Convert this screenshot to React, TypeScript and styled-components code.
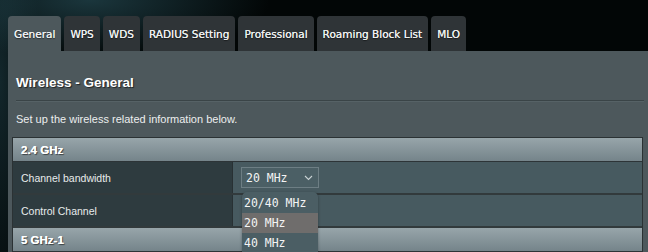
import React from "react";
import styled, { createGlobalStyle } from "styled-components";

const Global = createGlobalStyle`
  html, body { margin: 0; padding: 0; }
  body {
    width: 648px;
    height: 252px;
    overflow: hidden;
    background:
      radial-gradient(ellipse 180px 60px at 90px 0px, rgba(40, 80, 90, 0.65), rgba(0,0,0,0) 100%),
      radial-gradient(ellipse 40px 260px at 0px 80px, rgba(30, 60, 68, 0.6), rgba(0,0,0,0) 100%),
      #020606;
    font-family: "Liberation Sans", Arial, sans-serif;
  }
`;

const Page = styled.div`
  padding: 16px 0 0 8px;
`;

const Tabs = styled.div`
  display: flex;
  gap: 3px;
  height: 35px;
  align-items: flex-end;
`;

const Tab = styled.div<{ $active?: boolean }>`
  height: 35px;
  box-sizing: border-box;
  padding: 0 6px;
  display: flex;
  align-items: center;
  border-radius: 4px 4px 0 0;
  background: ${(p) => (p.$active ? "#4d585c" : "#2f3437")};
  color: #eef0f0;
  font-family: "DejaVu Sans", Verdana, sans-serif;
  font-size: 10.5px;
  text-shadow: 0 0 0.4px #eef0f0, 0 1px 1px rgba(0, 0, 0, 0.5);
`;

const Panel = styled.div`
  background: #4d585c;
  width: 640px;
  box-sizing: border-box;
  padding: 0 0 0 4px;
  height: 210px;
  position: relative;
`;

const Title = styled.div`
  padding: 21px 0 0 4px;
  line-height: 22px;
  font-size: 13.5px;
  font-weight: bold;
  color: #ffffff;
  text-shadow: 1px 1px 1px rgba(0, 0, 0, 0.6);
`;

const Separator = styled.div`
  margin: 6px 4px 0 4px;
  height: 1px;
  background: #3a4447;
  border-bottom: 1px solid #566266;
`;

const Desc = styled.div`
  padding: 9px 0 0 4px;
  line-height: 16px;
  font-size: 11px;
  color: #eceeee;
`;

const Table = styled.div`
  margin-top: 10px;
  width: 631px;
  border: 1px solid #2b3234;
  border-bottom: none;
  box-sizing: border-box;
`;

const Header = styled.div`
  height: 24px;
  box-sizing: border-box;
  display: flex;
  align-items: center;
  padding-left: 8px;
  background: linear-gradient(#97a5aa, #75848a);
  border-bottom: 1px solid #2d3437;
  font-size: 11.5px;
  font-weight: bold;
  color: #ffffff;
  text-shadow: 0 0 0.5px #ffffff, 1px 1px 1px rgba(0, 0, 0, 0.55);
`;

const Row = styled.div`
  display: grid;
  grid-template-columns: 220px 1fr;
  height: 33px;
  box-sizing: border-box;
  border-bottom: 2px solid #323a3c;
  background: #475a60;
`;

const Label = styled.div`
  display: flex;
  align-items: center;
  padding-left: 8px;
  background: #2e3b3f;
  border-right: 1px solid #283134;
  font-size: 10.5px;
  color: #e8ecec;
`;

const Cell = styled.div`
  display: flex;
  align-items: center;
  padding-left: 8px;
  position: relative;
`;

const Select = styled.div`
  width: 78px;
  height: 21px;
  box-sizing: border-box;
  border: 1px solid #6d7e84;
  background: #4b5f65;
  display: flex;
  align-items: center;
  justify-content: space-between;
  padding: 0 5px 0 4px;
  font-family: "DejaVu Sans Mono", "Liberation Mono", monospace;
  font-size: 11.5px;
  color: #f4f4f4;
`;

const Menu = styled.div`
  position: absolute;
  left: 9px;
  top: 30px;
  width: 76px;
  background: #4b5e64;
  border-radius: 5px 5px 0 0;
  box-shadow: 0 1px 3px rgba(0, 0, 0, 0.35);
  padding-top: 1px;
  z-index: 2;
`;

const Option = styled.div<{ $hover?: boolean }>`
  height: 20px;
  display: flex;
  align-items: center;
  padding-left: 2px;
  background: ${(p) => (p.$hover ? "#6f6d6c" : "transparent")};
  font-family: "DejaVu Sans Mono", "Liberation Mono", monospace;
  font-size: 11.5px;
  color: #f4f4f4;
`;

const Chevron = () => (
  <svg width="9" height="6" viewBox="0 0 9 6">
    <path d="M1 1 L4.5 4.5 L8 1" fill="none" stroke="#c9d2d4" strokeWidth="1.1" />
  </svg>
);

export default function App() {
  const tabs = ["General", "WPS", "WDS", "RADIUS Setting", "Professional", "Roaming Block List", "MLO"];
  return (
    <>
      <Global />
      <Page>
        <Tabs>
          {tabs.map((t, i) => (
            <Tab key={t} $active={i === 0}>
              {t}
            </Tab>
          ))}
        </Tabs>
        <Panel>
          <Title>Wireless - General</Title>
          <Separator />
          <Desc>Set up the wireless related information below.</Desc>
          <Table>
            <Header>2.4 GHz</Header>
            <Row>
              <Label>Channel bandwidth</Label>
              <Cell>
                <Select>
                  <span>20 MHz</span>
                  <Chevron />
                </Select>
                <Menu>
                  <Option>20/40 MHz</Option>
                  <Option $hover>20 MHz</Option>
                  <Option>40 MHz</Option>
                </Menu>
              </Cell>
            </Row>
            <Row>
              <Label>Control Channel</Label>
              <Cell />
            </Row>
            <Header>5 GHz-1</Header>
          </Table>
        </Panel>
      </Page>
    </>
  );
}
